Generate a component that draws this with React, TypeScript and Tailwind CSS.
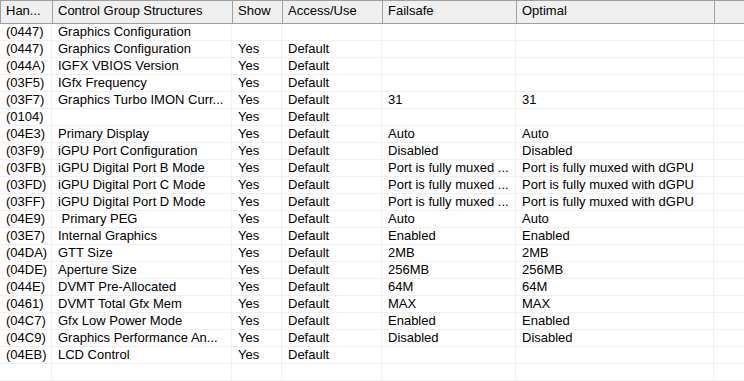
const cols = [
  "w-[52px]",
  "w-[180px]",
  "w-[50px]",
  "w-[100px]",
  "w-[134px]",
  "w-[198px]",
];

const headers = ["Han...", "Control Group Structures", "Show", "Access/Use", "Failsafe", "Optimal"];

const rows: string[][] = [
  ["(0447)", "Graphics Configuration", "", "", "", ""],
  ["(0447)", "Graphics Configuration", "Yes", "Default", "", ""],
  ["(044A)", "IGFX VBIOS Version", "Yes", "Default", "", ""],
  ["(03F5)", "IGfx Frequency", "Yes", "Default", "", ""],
  ["(03F7)", "Graphics Turbo IMON Curr...", "Yes", "Default", "31", "31"],
  ["(0104)", "", "Yes", "Default", "", ""],
  ["(04E3)", "Primary Display", "Yes", "Default", "Auto", "Auto"],
  ["(03F9)", "iGPU Port Configuration", "Yes", "Default", "Disabled", "Disabled"],
  ["(03FB)", "iGPU Digital Port B Mode", "Yes", "Default", "Port is fully muxed ...", "Port is fully muxed with dGPU"],
  ["(03FD)", "iGPU Digital Port C Mode", "Yes", "Default", "Port is fully muxed ...", "Port is fully muxed with dGPU"],
  ["(03FF)", "iGPU Digital Port D Mode", "Yes", "Default", "Port is fully muxed ...", "Port is fully muxed with dGPU"],
  ["(04E9)", " Primary PEG", "Yes", "Default", "Auto", "Auto"],
  ["(03E7)", "Internal Graphics", "Yes", "Default", "Enabled", "Enabled"],
  ["(04DA)", "GTT Size", "Yes", "Default", "2MB", "2MB"],
  ["(04DE)", "Aperture Size", "Yes", "Default", "256MB", "256MB"],
  ["(044E)", "DVMT Pre-Allocated", "Yes", "Default", "64M", "64M"],
  ["(0461)", "DVMT Total Gfx Mem", "Yes", "Default", "MAX", "MAX"],
  ["(04C7)", "Gfx Low Power Mode", "Yes", "Default", "Enabled", "Enabled"],
  ["(04C9)", "Graphics Performance An...", "Yes", "Default", "Disabled", "Disabled"],
  ["(04EB)", "LCD Control", "Yes", "Default", "", ""],
  ["", "", "", "", "", ""],
];

export default function App() {
  return (
    <div className="w-[744px] h-[381px] overflow-hidden bg-white text-black text-[13px] font-['Liberation_Sans',Arial,sans-serif]">
      <div className="flex h-[24px] bg-[#f0f0f0] border-t border-l border-b border-[#a0a0a0]">
        {headers.map((h, i) => (
          <div
            key={i}
            className={`${cols[i]} shrink-0 flex items-center pl-[5px] pb-[2px] border-r border-[#a0a0a0] whitespace-pre`}
          >
            {h}
          </div>
        ))}
        <div className="flex-1" />
      </div>
      {rows.map((r, ri) => (
        <div key={ri} className="flex h-[17px] border-b border-[#f0f0f0]">
          {r.map((c, ci) => (
            <div
              key={ci}
              className={`${cols[ci]} shrink-0 flex items-center pl-[6px] border-r border-[#f0f0f0] whitespace-pre overflow-hidden`}
            >
              {c}
            </div>
          ))}
          <div className="flex-1" />
        </div>
      ))}
    </div>
  );
}
